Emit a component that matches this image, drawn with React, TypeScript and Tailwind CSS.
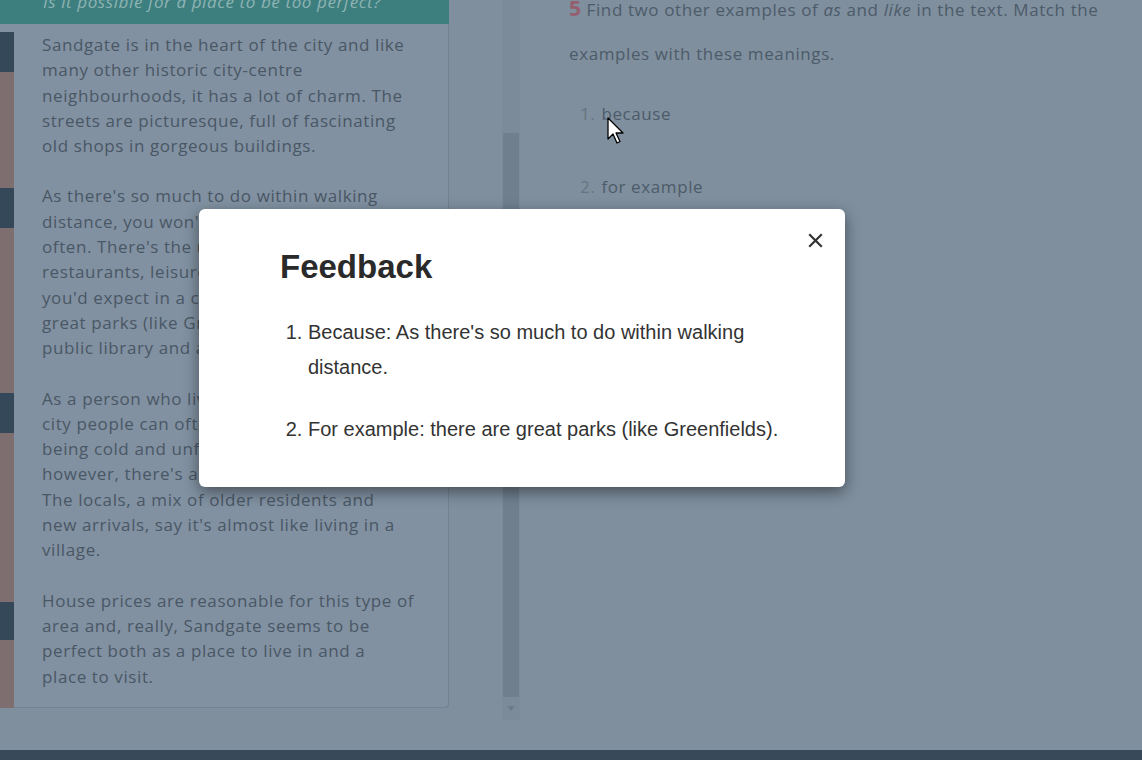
const strip = [
  { h: 'h-[8px]', c: 'bg-[#8191a1]' },
  { h: 'h-[40px]', c: 'bg-[#34485a]' },
  { h: 'h-[116px]', c: 'bg-[#7e6e70]' },
  { h: 'h-[40px]', c: 'bg-[#34485a]' },
  { h: 'h-[165px]', c: 'bg-[#7e6e70]' },
  { h: 'h-[40px]', c: 'bg-[#34485a]' },
  { h: 'h-[169px]', c: 'bg-[#7e6e70]' },
  { h: 'h-[38px]', c: 'bg-[#34485a]' },
  { h: 'h-[68px]', c: 'bg-[#7e6e70]' },
];

function ReadingPane() {
  return (
    <div className="flex w-[520px] shrink-0">
      <div className="w-[502px] flex flex-col">
        <div className="w-[449px] h-[24px] bg-[#3d7f7f] overflow-hidden">
          <p className="pl-[43px] -mt-[11px] text-[17px] leading-[25px] italic tracking-[0.6px] text-[#8fb3b3]">
            Is it possible for a place to be too perfect?
          </p>
        </div>
        <div className="flex">
          <div className="w-[14px] flex flex-col">
            {strip.map((s, i) => (
              <div key={i} className={`${s.h} ${s.c}`} />
            ))}
          </div>
          <div className="w-[435px] h-[684px] bg-[#8191a1] border-r border-b border-[#72828f] rounded-br-[4px] pl-[28px] pt-[8px] text-[17px] leading-[25.3px] text-[#4a5765] tracking-[0.6px]">
            <p className="mb-[25px]">
              Sandgate is in the heart of the city and like<br />
              many other historic city-centre<br />
              neighbourhoods, it has a lot of charm. The<br />
              streets are picturesque, full of fascinating<br />
              old shops in gorgeous buildings.
            </p>
            <p className="mb-[25px]">
              As there's so much to do within walking<br />
              distance, you won't need to use your car<br />
              often. There's the usual mix of shops,<br />
              restaurants, leisure centres and cafés<br />
              you'd expect in a city centre, and there are<br />
              great parks (like Greenfields), a lovely<br />
              public library and a museum.
            </p>
            <p className="mb-[25px]">
              As a person who lives here, I find that<br />
              city people can often be accused of<br />
              being cold and unfriendly. In Sandgate,<br />
              however, there's a real sense of community.<br />
              The locals, a mix of older residents and<br />
              new arrivals, say it's almost like living in a<br />
              village.
            </p>
            <p>
              House prices are reasonable for this type of<br />
              area and, really, Sandgate seems to be<br />
              perfect both as a place to live in and a<br />
              place to visit.
            </p>
          </div>
        </div>
      </div>
      <div className="w-[18px] h-[720px] bg-[#7b8b9a] flex flex-col">
        <div className="h-[133px]" />
        <div className="h-[564px] mx-[1px] bg-[#6f7f8e]" />
        <div className="flex-1 flex items-center justify-center">
          <div className="w-0 h-0 border-l-[4px] border-r-[4px] border-t-[5px] border-l-transparent border-r-transparent border-t-[#6b7b8a]" />
        </div>
      </div>
    </div>
  );
}

function Exercise() {
  return (
    <div className="pl-[49px] pr-[28px] -mt-[14px] text-[17px] tracking-[0.6px] text-[#4d5b69]">
      <p className="leading-[44px]">
        <span className="text-[21px] font-bold text-[#955f70] mr-[5px]">5</span>
        Find two other examples of <i>as</i> and <i>like</i> in the text. Match the examples with these meanings.
      </p>
      <ol className="mt-[27px] pl-[11px] space-y-[51px]">
        <li className="leading-[22px]"><span className="text-[#67757f] mr-[6px]">1.</span>because</li>
        <li className="leading-[22px]"><span className="text-[#67757f] mr-[6px]">2.</span>for example</li>
      </ol>
    </div>
  );
}

function FeedbackModal() {
  return (
    <div className="absolute left-[199px] top-[209px] w-[646px] h-[278px] bg-white rounded-[6px] shadow-[0_5px_15px_rgba(0,0,0,0.45)] font-['Liberation_Sans',Arial,sans-serif] text-[#333]">
      <button className="absolute right-[22px] top-[23px] w-[16px] h-[16px] flex items-center justify-center">
        <svg width="15" height="15" viewBox="0 0 15 15">
          <path d="M2 2L13 13M13 2L2 13" stroke="#333" strokeWidth="2.2" strokeLinecap="square" />
        </svg>
      </button>
      <div className="pl-[81px] pr-[40px] pt-[37px]">
        <h2 className="text-[33px] font-bold leading-[42px] text-[#2a2a2a]">Feedback</h2>
        <ol className="list-decimal pl-[28px] mt-[27px] text-[20px] leading-[35px]">
          <li className="mb-[27px]">Because: As there's so much to do within walking distance.</li>
          <li>For example: there are great parks (like Greenfields).</li>
        </ol>
      </div>
    </div>
  );
}

function Cursor() {
  return (
    <svg className="absolute left-[607px] top-[117px]" width="20" height="28" viewBox="0 0 20 28">
      <path d="M1 1 L1 22 L6 17 L10 26 L13 24.5 L9 16 L16 16 Z" fill="white" stroke="black" strokeWidth="1.3" strokeLinejoin="round" />
    </svg>
  );
}

export default function App() {
  return (
    <div className="relative w-[1142px] h-[760px] overflow-hidden bg-[#7f8f9e] font-['Open_Sans','Liberation_Sans',sans-serif]">
      <div className="flex h-[750px]">
        <ReadingPane />
        <Exercise />
      </div>
      <div className="h-[10px] bg-[#384a5a]" />
      <FeedbackModal />
      <Cursor />
    </div>
  );
}
